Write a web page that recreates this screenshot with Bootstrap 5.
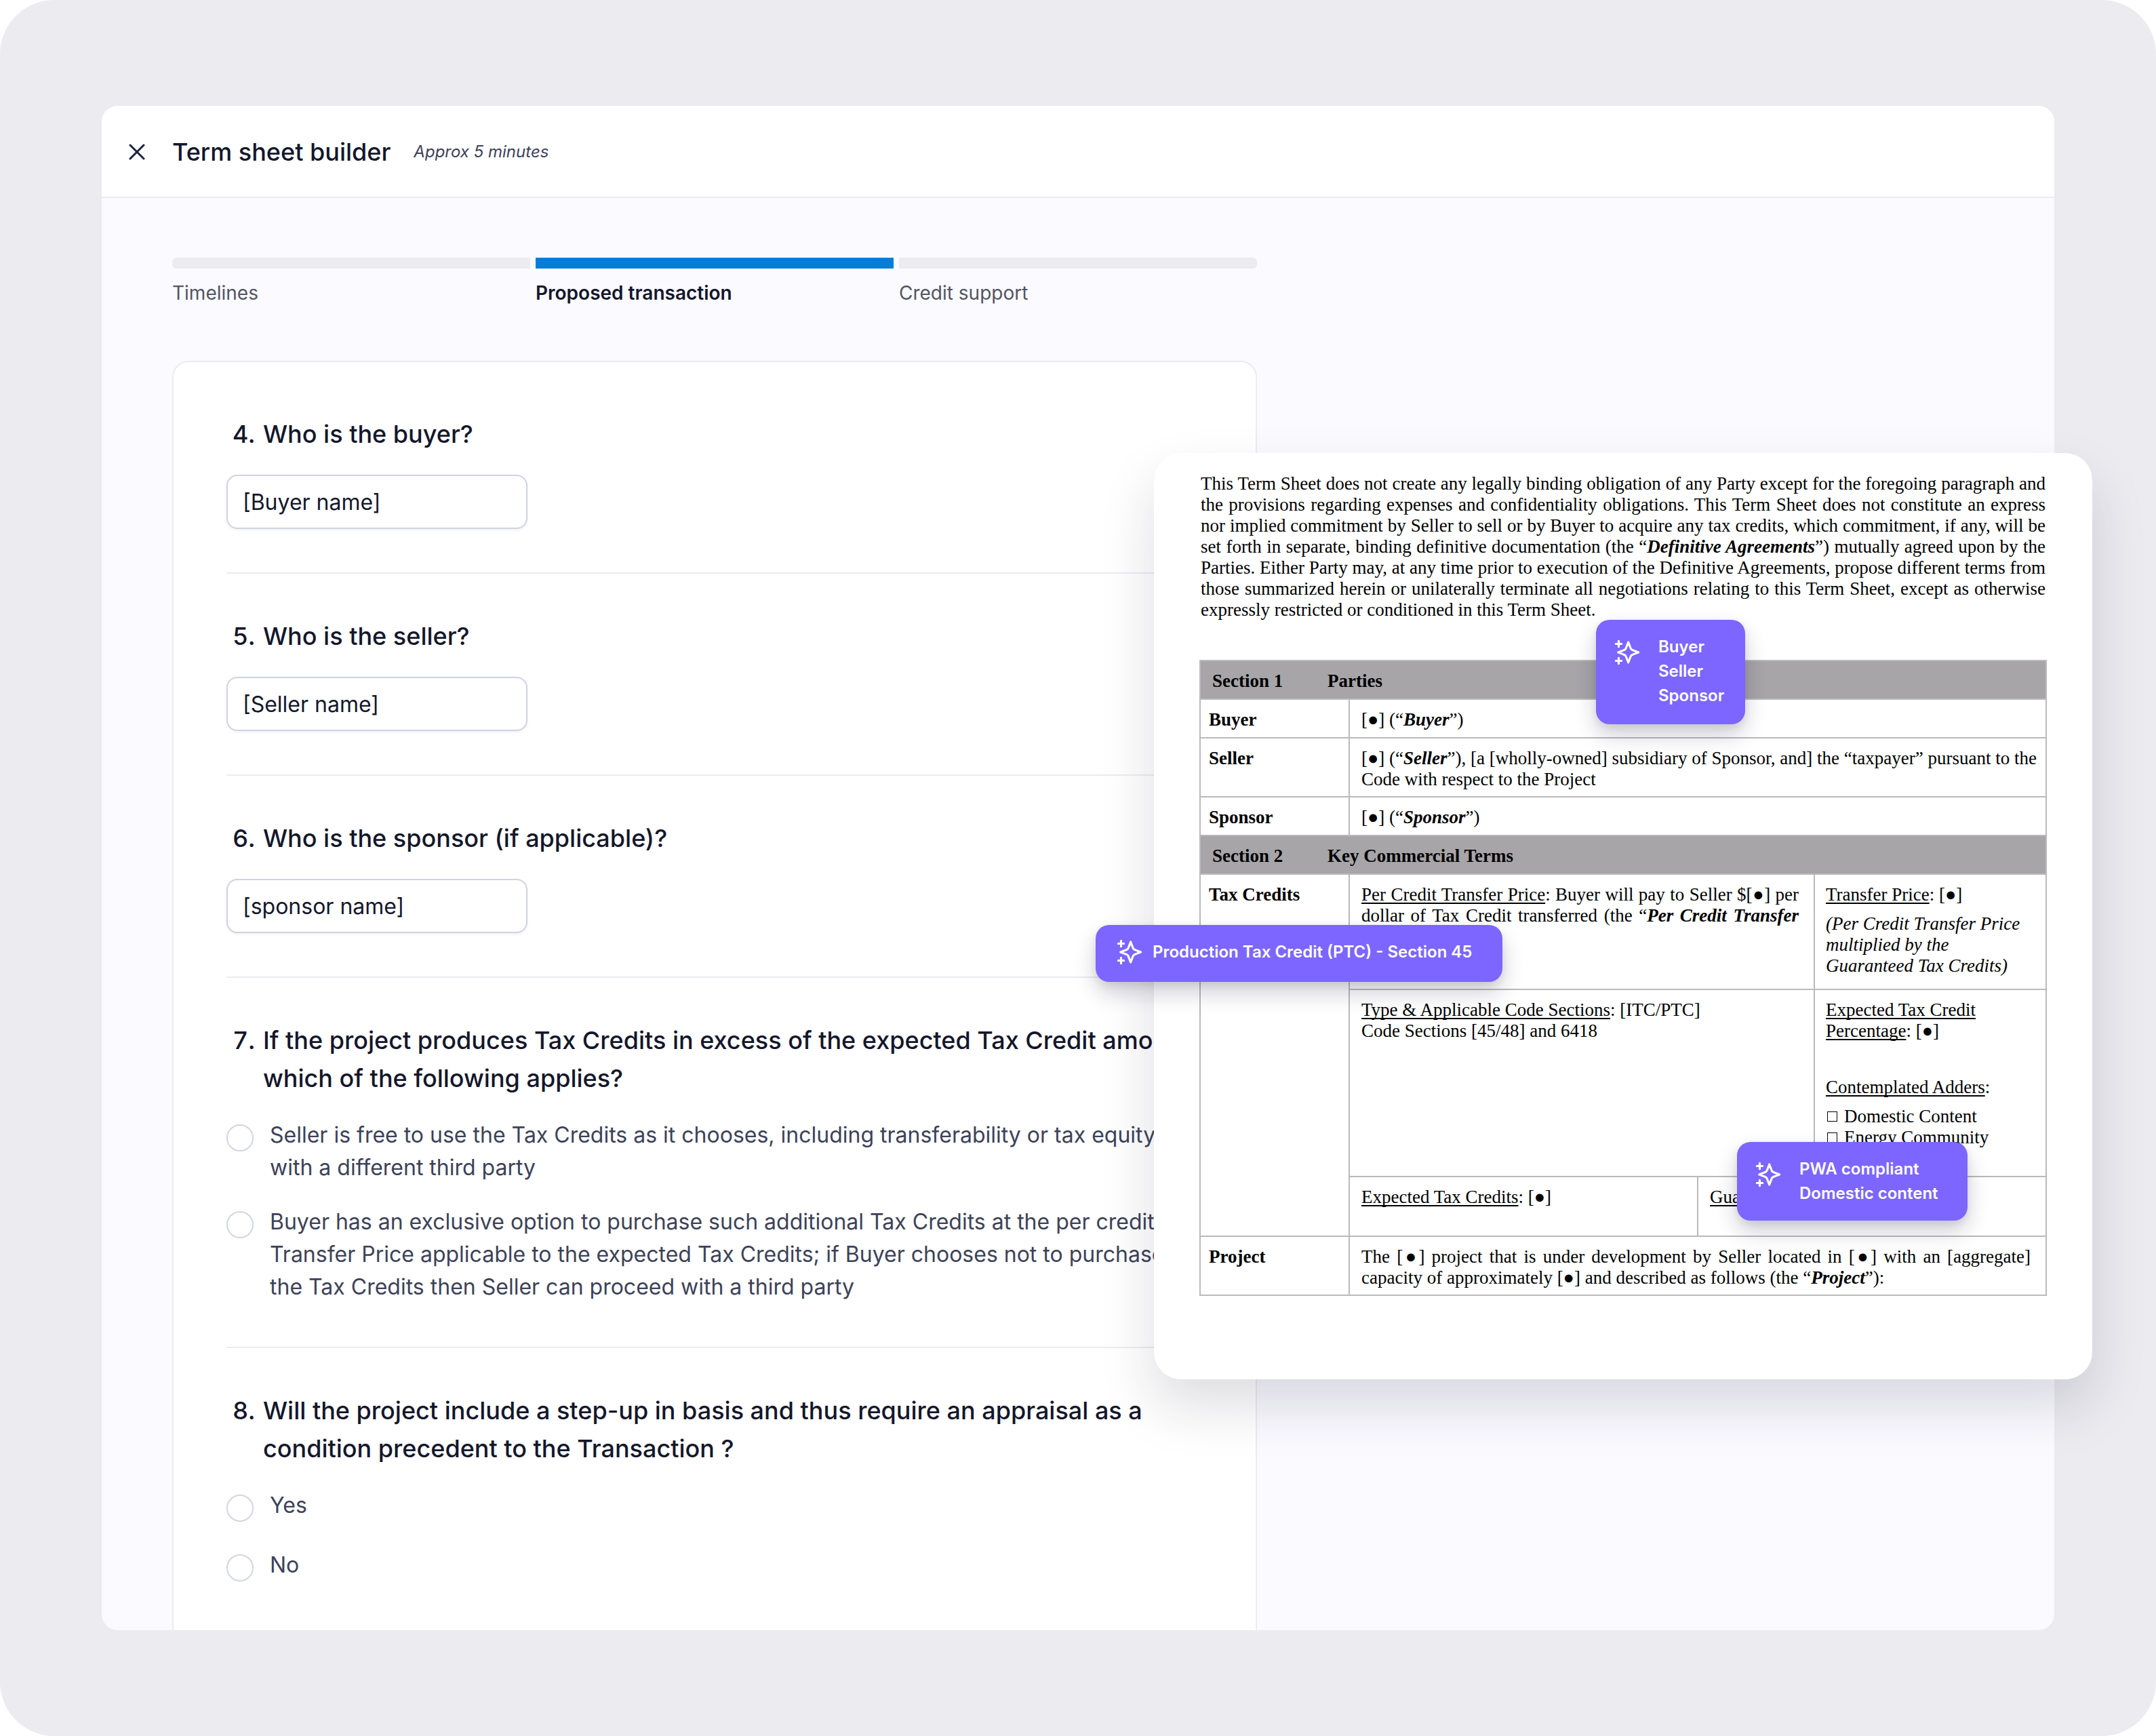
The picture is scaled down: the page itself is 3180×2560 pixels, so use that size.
<!DOCTYPE html>
<html lang="en">
<head>
<meta charset="utf-8">
<meta name="viewport" content="width=device-width, initial-scale=1">
<title>Term sheet builder</title>
<link rel="stylesheet" href="https://cdn.jsdelivr.net/npm/bootstrap@5.3.0/dist/css/bootstrap.min.css">
<style>
  :root { --ink: #14172b; --soft: #3d4258; --line: #ebebf0; --violet: #7c66ff; }
  body { font-family: Inter, "Liberation Sans", sans-serif; color: var(--ink); background: #fff; }
  .stage { min-height: 100vh; padding: 156px 150px; background: #ebebf0; border-radius: 80px; }
  .window { background: #fafaff; border-radius: 24px; height: calc(100vh - 312px); }
  .window-head { padding: 40px 40px 38px; gap: 40px; border-bottom: 2px solid var(--line); }
  .close-btn { width: 24px; height: 24px; line-height: 0; color: #1d2238; }
  .window-title { font-size: 36px; line-height: 56px; font-weight: 500; }
  .approx { font-size: 24px; line-height: 56px; font-style: italic; color: var(--soft); margin-left: 34px; }
  .window-body { padding: 88px 104px 0; }
  .form-column { max-width: 1600px; }

  .steps { margin-bottom: 80px; }
  .steps a { color: #525463; font-size: 28px; line-height: 40px; }
  .steps a::before { content: ""; display: block; height: 16px; margin-bottom: 16px; background: var(--line); }
  .steps li:first-child a::before { border-radius: 6px 0 0 6px; }
  .steps li:last-child a::before { border-radius: 0 6px 6px 0; }
  .steps a.current { color: var(--ink); font-weight: 600; }
  .steps a.current::before { background: #007fd8; }

  .form-card { border: 2px solid var(--line); border-radius: 24px; padding: 78px; }
  .question { padding-bottom: 64px; margin-bottom: 64px; border-bottom: 2px solid var(--line); }
  .question-title { font-size: 36px; line-height: 56px; font-weight: 500; margin-bottom: 32px; gap: 12px; white-space: nowrap; }
  .question-number { width: 42px; text-align: right; font-variant-numeric: tabular-nums; }
  .name-field { width: 444px; height: 80px; padding: 0 22px; font-size: 32px; color: var(--ink); border: 2px solid #cfd3e2; border-radius: 16px; box-shadow: 0 2px 4px rgba(16, 24, 40, .06); }
  .choice { gap: 24px; font-size: 32px; line-height: 48px; color: var(--soft); white-space: nowrap; }
  .choice + .choice { margin-top: 32px; }
  .choice .form-check-input { width: 40px; height: 40px; margin: 8px 0; border: 2px solid #d3d5e2; }

  .sheet { top: 668px; right: 94px; width: 1384px; min-height: 1366px; padding: 30px 67px 60px; background: #fff; border-radius: 40px; color: #000;
    font: 27px/31px "Liberation Serif", serif; box-shadow: 0 40px 80px rgba(34, 28, 54, .15); }
  .sheet-intro { margin: 0 2px 58px; text-align: justify; }
  .terms { width: 1250px; table-layout: fixed; border-collapse: collapse; }
  .terms th, .terms td { padding: 14px 10px 9px 17px; border: 2px solid #bababa; vertical-align: top; height: 57px; }
  .terms .justified { text-align: justify; padding-right: 22px; }
  .terms th[scope=row] { padding-left: 12px; }
  .terms .section-bar th { background: #a7a5a8; padding-bottom: 8px; }
  .terms .section-bar span { width: 170px; }
  .terms .tall-price td { height: 170px; }
  .terms .tall-type td { height: 276px; }
  .terms .tall-expected td { height: 88px; }
  .terms .side { padding-left: 16px; }
  .terms u { text-decoration-thickness: 2px; text-underline-offset: 3px; text-decoration-skip-ink: none; }
  .tick-box { width: 15px; height: 15px; margin: 0 10px 0 2px; border: 1px solid #000; border-radius: 0; background: #fff; appearance: none; }

  .hint { background: var(--violet); color: #fff; border-radius: 20px; padding: 22px 30px 22px 26px; gap: 26px;
    font: 600 24px/36px Inter, "Liberation Sans", sans-serif; box-shadow: 0 16px 32px rgba(20, 16, 50, .2), 0 4px 12px rgba(20, 16, 50, .08); }
  .hint svg { width: 40px; height: 40px; flex: none; margin-top: 6px; }
  .hint-parties { top: 246px; left: 652px; width: 220px; min-height: 154px; }
  .hint-credit { top: 696px; left: -86px; width: 600px; padding: 20px 30px 24px; gap: 14px; }
  .hint-credit svg { margin-top: 0; }
  .hint-adders { top: 1016px; left: 860px; width: 340px; }
</style>
<script src="https://cdn.jsdelivr.net/npm/bootstrap@5.3.0/dist/js/bootstrap.bundle.min.js"></script>
</head>
<body>
<svg class="d-none" aria-hidden="true">
  <symbol id="sparkles" viewBox="0 0 24 24">
    <path fill="none" stroke="currentColor" stroke-width="1.9" stroke-linecap="round" stroke-linejoin="round" d="M4.5 22V17M4.5 7V2M2 4.5H7M2 19.5H7M13 3L11.27 7.51C10.98 8.24 10.84 8.61 10.62 8.92C10.43 9.19 10.19 9.43 9.92 9.62C9.61 9.84 9.24 9.98 8.51 10.27L4 12L8.51 13.73C9.24 14.02 9.61 14.16 9.92 14.38C10.19 14.57 10.43 14.81 10.62 15.08C10.84 15.39 10.98 15.76 11.27 16.49L13 21L14.73 16.49C15.02 15.76 15.16 15.39 15.38 15.08C15.57 14.81 15.81 14.57 16.08 14.38C16.39 14.16 16.76 14.02 17.49 13.73L22 12L17.49 10.27C16.76 9.98 16.39 9.84 16.08 9.62C15.81 9.43 15.57 9.19 15.38 8.92C15.16 8.61 15.02 8.24 14.73 7.51L13 3Z"/>
  </symbol>
</svg>

<div class="stage position-relative overflow-hidden">
  <main class="window overflow-hidden">
    <header class="window-head d-flex align-items-center bg-white">
      <button type="button" class="close-btn btn p-0 border-0" aria-label="Close">
        <svg width="24" height="24" viewBox="0 0 24 24" fill="none" stroke="currentColor" stroke-width="3" stroke-linecap="round"><path d="M2 2L22 22M22 2L2 22"/></svg>
      </button>
      <div class="d-flex align-items-center">
        <h1 class="window-title m-0">Term sheet builder</h1>
        <span class="approx">Approx 5 minutes</span>
      </div>
    </header>

    <div class="window-body">
      <div class="form-column">
        <ol class="steps list-unstyled d-flex gap-2">
          <li class="flex-fill w-100"><a href="#" class="d-block text-decoration-none">Timelines</a></li>
          <li class="flex-fill w-100"><a href="#" class="d-block text-decoration-none current" aria-current="step">Proposed transaction</a></li>
          <li class="flex-fill w-100"><a href="#" class="d-block text-decoration-none">Credit support</a></li>
        </ol>

        <form class="form-card bg-white">
          <div class="question">
            <label class="question-title d-flex" for="buyer"><span class="question-number">4.</span><span>Who is the buyer?</span></label>
            <input class="name-field form-control" id="buyer" type="text" value="[Buyer name]">
          </div>
          <div class="question">
            <label class="question-title d-flex" for="seller"><span class="question-number">5.</span><span>Who is the seller?</span></label>
            <input class="name-field form-control" id="seller" type="text" value="[Seller name]">
          </div>
          <div class="question">
            <label class="question-title d-flex" for="sponsor"><span class="question-number">6.</span><span>Who is the sponsor (if applicable)?</span></label>
            <input class="name-field form-control" id="sponsor" type="text" value="[sponsor name]">
          </div>
          <fieldset class="question">
            <legend class="question-title d-flex"><span class="question-number">7.</span><span>If the project produces Tax Credits in excess of the expected Tax Credit amount,<br>which of the following applies?</span></legend>
            <div class="choice d-flex">
              <input class="form-check-input flex-shrink-0" type="radio" name="excess" id="excess-seller">
              <label for="excess-seller">Seller is free to use the Tax Credits as it chooses, including transferability or tax equity<br>with a different third party</label>
            </div>
            <div class="choice d-flex">
              <input class="form-check-input flex-shrink-0" type="radio" name="excess" id="excess-buyer">
              <label for="excess-buyer">Buyer has an exclusive option to purchase such additional Tax Credits at the per credit<br>Transfer Price applicable to the expected Tax Credits; if Buyer chooses not to purchase<br>the Tax Credits then Seller can proceed with a third party</label>
            </div>
          </fieldset>
          <fieldset class="question">
            <legend class="question-title d-flex"><span class="question-number">8.</span><span>Will the project include a step-up in basis and thus require an appraisal as a<br>condition precedent to the Transaction ?</span></legend>
            <div class="choice d-flex">
              <input class="form-check-input flex-shrink-0" type="radio" name="stepup" id="stepup-yes">
              <label for="stepup-yes">Yes</label>
            </div>
            <div class="choice d-flex">
              <input class="form-check-input flex-shrink-0" type="radio" name="stepup" id="stepup-no">
              <label for="stepup-no">No</label>
            </div>
          </fieldset>
        </form>
      </div>
    </div>
  </main>

  <article class="sheet position-absolute">
    <p class="sheet-intro">This Term Sheet does not create any legally binding obligation of any Party except for the foregoing paragraph and the provisions regarding expenses and confidentiality obligations. This Term Sheet does not constitute an express nor implied commitment by Seller to sell or by Buyer to acquire any tax credits, which commitment, if any, will be set forth in separate, binding definitive documentation (the “<b><i>Definitive Agreements</i></b>”) mutually agreed upon by the Parties. Either Party may, at any time prior to execution of the Definitive Agreements, propose different terms from those summarized herein or unilaterally terminate all negotiations relating to this Term Sheet, except as otherwise expressly restricted or conditioned in this Term Sheet.</p>

    <table class="terms">
      <colgroup><col style="width:220px"><col style="width:514px"><col style="width:172px"><col style="width:342px"></colgroup>
      <tr class="section-bar"><th colspan="4" scope="colgroup"><span class="d-inline-block">Section 1</span>Parties</th></tr>
      <tr><th scope="row">Buyer</th><td colspan="3">[●] (“<b><i>Buyer</i></b>”)</td></tr>
      <tr><th scope="row">Seller</th><td colspan="3">[●] (“<b><i>Seller</i></b>”), [a [wholly-owned] subsidiary of Sponsor, and] the “taxpayer” pursuant to the Code with respect to the Project</td></tr>
      <tr><th scope="row">Sponsor</th><td colspan="3">[●] (“<b><i>Sponsor</i></b>”)</td></tr>
      <tr class="section-bar"><th colspan="4" scope="colgroup"><span class="d-inline-block">Section 2</span>Key Commercial Terms</th></tr>
      <tr class="tall-price">
        <th scope="row" rowspan="3">Tax Credits</th>
        <td colspan="2" class="justified"><u>Per Credit Transfer Price</u>: Buyer will pay to Seller $[●] per dollar of Tax Credit transferred (the “<b><i>Per Credit Transfer Price</i></b>”).</td>
        <td class="side"><u>Transfer Price</u>: [●]<div class="pt-2 mt-1"><i>(Per Credit Transfer Price<br>multiplied by the<br>Guaranteed Tax Credits)</i></div></td>
      </tr>
      <tr class="tall-type">
        <td colspan="2"><u>Type &amp; Applicable Code Sections</u>: [ITC/PTC]<br>Code Sections [45/48] and 6418</td>
        <td class="side"><u>Expected Tax Credit</u><br><u>Percentage</u>: [●]
          <div class="pt-5 mt-1"><u>Contemplated Adders</u>:</div>
          <div class="d-flex align-items-center pt-2 mt-1"><input class="tick-box" type="checkbox" id="domestic"><label for="domestic">Domestic Content</label></div>
          <div class="d-flex align-items-center"><input class="tick-box" type="checkbox" id="energy"><label for="energy">Energy Community</label></div>
        </td>
      </tr>
      <tr class="tall-expected"><td><u>Expected Tax Credits</u>: [●]</td><td colspan="2"><u>Guaranteed Tax Credits</u></td></tr>
      <tr><th scope="row">Project</th><td colspan="3" class="justified">The [●] project that is under development by Seller located in [●] with an [aggregate] capacity of approximately [●] and described as follows (the “<b><i>Project</i></b>”):</td></tr>
    </table>

    <aside class="hint hint-parties position-absolute d-flex align-items-start">
      <svg aria-hidden="true"><use href="#sparkles"/></svg><div>Buyer<br>Seller<br>Sponsor</div>
    </aside>
    <aside class="hint hint-credit position-absolute d-flex align-items-center text-nowrap">
      <svg aria-hidden="true"><use href="#sparkles"/></svg><div>Production Tax Credit (PTC) - Section 45</div>
    </aside>
    <aside class="hint hint-adders position-absolute d-flex align-items-start text-nowrap">
      <svg aria-hidden="true"><use href="#sparkles"/></svg><div>PWA compliant<br>Domestic content</div>
    </aside>
  </article>
</div>
</body>
</html>
